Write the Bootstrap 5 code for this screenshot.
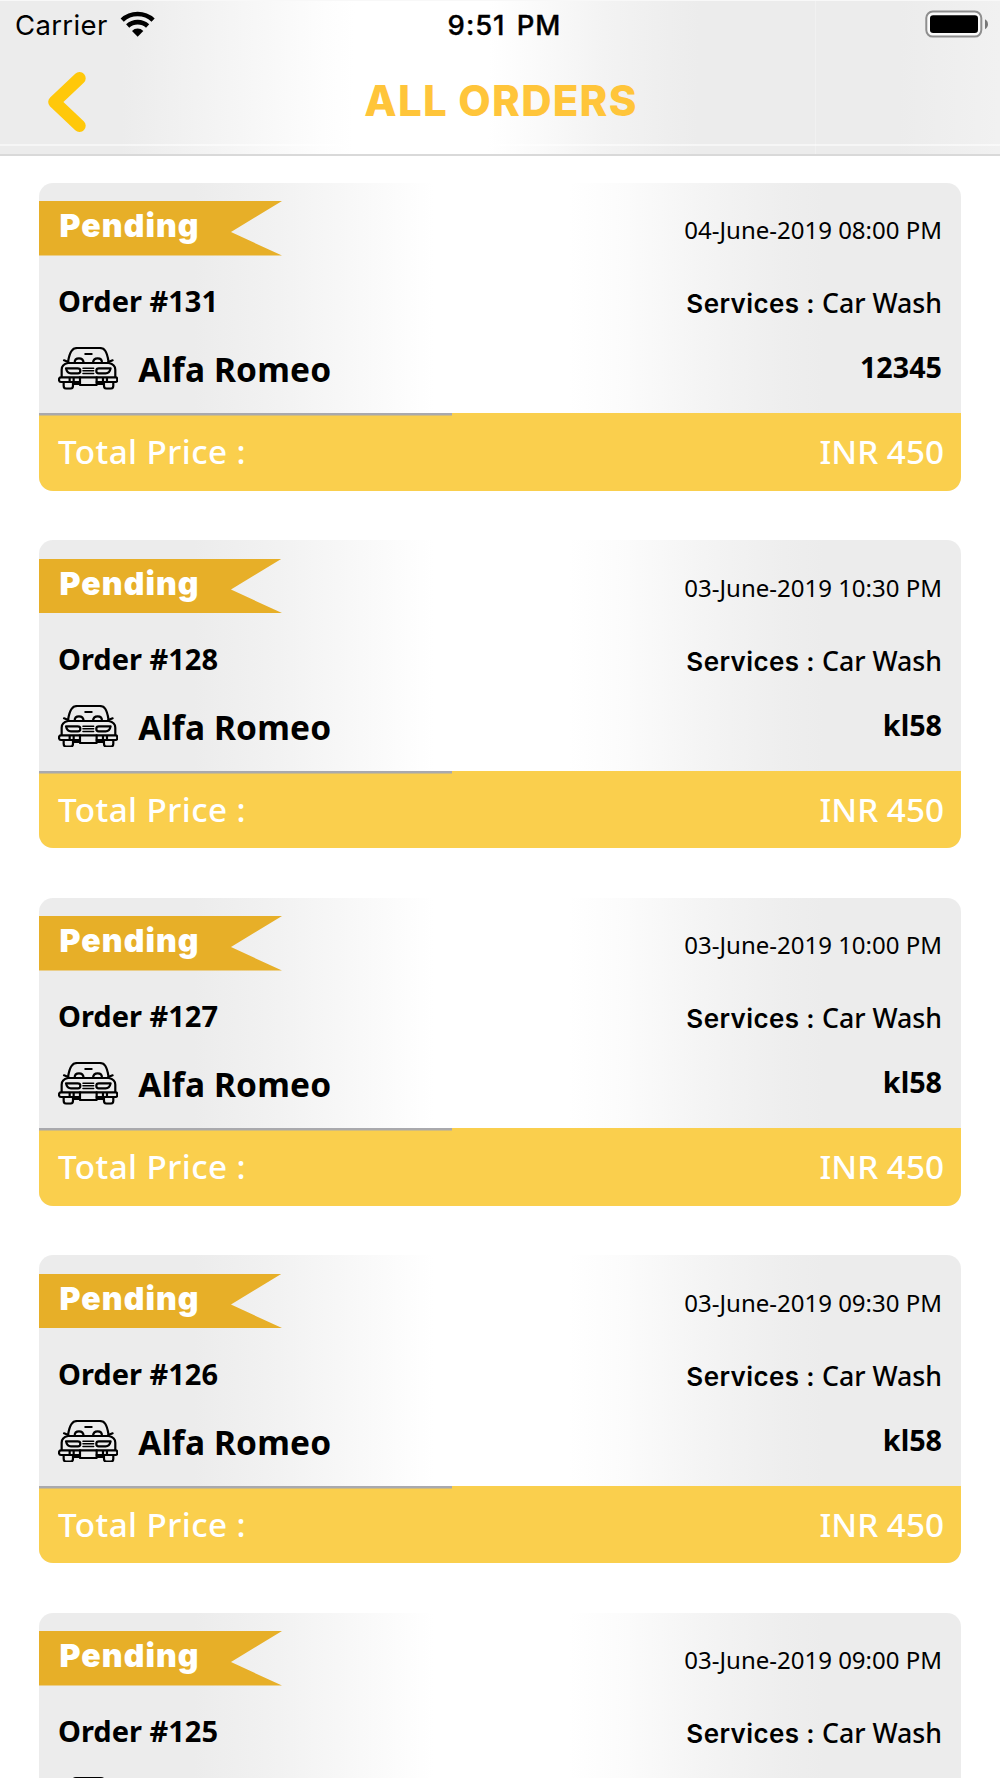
<!DOCTYPE html>
<html lang="en">
<head>
<meta charset="utf-8">
<meta name="viewport" content="width=device-width, initial-scale=1">
<title>All Orders</title>
<link rel="stylesheet" href="https://cdn.jsdelivr.net/npm/bootstrap@5.3.0/dist/css/bootstrap.min.css">
<style>
  body { font-family: "Noto Sans", sans-serif; color: #000; background: #fff; height: 1778px; overflow: hidden; }
  .app-header { height: 156px; border-bottom: 2px solid #d9d9d9; border-top: 1px solid #f8f8f8;
    background:
      linear-gradient(rgba(255,255,255,.55), rgba(255,255,255,.55)) 0 143px / 100% 2px no-repeat,
      linear-gradient(rgba(255,255,255,.25), rgba(255,255,255,.25)) 815px 0 / 1px 100% no-repeat,
      linear-gradient(91deg, #ececec 0, #ececec 124px, #f1f1f1 185px, #f7f7f7 255px, #fdfdfd 325px, #fff 355px, #fff 490px, #fafafa 540px, #f3f3f3 605px, #eeeeee 670px, #ececec 700px, #ececec 900px, #f1f1f1 1000px); }
  .side { flex: 1 1 0; }
  .status-bar { height: 49px; padding: 0 11px 0 15px; font-family: Inter, sans-serif; line-height: 49px; }
  .carrier { font-size: 27.5px; letter-spacing: .35px; }
  .clock { font-size: 27.5px; font-weight: 500; letter-spacing: .95px; word-spacing: 3px; margin-left: 5px; -webkit-text-stroke: .35px #000; }
  .wifi { width: 35.3px; height: 26.3px; margin: 10px 0 0 12px; }
  .battery { width: 64px; height: 28px; margin-top: 9px; }
  .title-bar { height: 104px; padding: 0 48px; }
  .back { width: 38px; height: 60px; margin-top: 22px; }
  .page-title { font: 800 42px/102px Inter, sans-serif; letter-spacing: 1.25px; padding-left: 2px; color: #ffc53a; }
  .orders { padding: 26.5px 39px 0; gap: 49.5px; }
  .order-card { height: 308px; border-radius: 14px; border: 0; overflow: hidden; flex: none; color: #000;
    background: linear-gradient(90deg, #ececec 0, #ececec 155px, #f2f2f2 240px, #f8f8f8 310px, #fdfdfd 370px, #fff 395px, #fff 530px, #fbfbfb 590px, #f4f4f4 665px, #eeeeee 745px, #ececec 785px); }
  .order-body { height: 230.5px; padding: 18.5px 19px 0 0; }
  .ribbon { width: 243px; height: 54.5px; padding-left: 20.5px; background: #e7af28; clip-path: polygon(0 0, 100% 0, 79% 57%, 100% 100%, 0 100%); color: #fff; font: 900 32px/50px Inter, sans-serif; letter-spacing: 1.1px; }
  .when { font-size: 24px; line-height: 57px; }
  .mid-row { height: 67px; margin-top: 9px; padding-left: 19px; line-height: 67px; }
  .order-no { font-size: 29px; font-weight: 700; }
  .svc { font-size: 26.7px; font-weight: 550; line-height: 71px; }
  .svc-label { font: 600 26px Inter, sans-serif; letter-spacing: .4px; }
  .car-row { height: 67px; padding-left: 19px; line-height: 70px; }
  .car-icon { width: 60.3px; height: 42.7px; margin: 13.3px 20px 0 0; }
  .car-name { font-size: 33.5px; font-weight: 700; letter-spacing: .15px; }
  .plate { font-size: 28.7px; font-weight: 700; line-height: 66px; }
  .order-total { height: 77.5px; padding: 0 17px 0 19px; line-height: 77px; color: #fff; font-size: 33.3px; font-weight: 500;
    background: linear-gradient(#a9a9ad, #a9a9ad) 0 0 / 413px 2.5px no-repeat #facf4d; }
  .total-label { letter-spacing: .4px; }
</style>
</head>
<body>
<svg class="d-none" aria-hidden="true">
  <symbol id="car" viewBox="24 36 181 128">
    <g fill="none" stroke="#000" stroke-width="6.6" stroke-linecap="round" stroke-linejoin="round">
      <path d="M54 81C57 62 62 51 66 46Q71 39 82 39H149Q160 39 165 46C169 51 173 62 176 81"/>
      <path d="M42 76L55 81M188 76L175 81M106 57H125"/>
      <path d="M74 83C74 74 78 70 87 70C96 70 100 74 101 83M129 83C130 74 134 70 143 70C152 70 156 74 156 83"/>
      <path d="M54 84H176M54 84Q35 88 35 104V126M176 84Q196 88 196 104V126"/>
      <path d="M48 100H83Q91 100 91 107Q91 115 84 115H63Q51 115 48 100ZM182 100H147Q139 100 139 107Q139 115 146 115H167Q179 115 182 100Z"/>
      <path stroke-width="4.6" d="M99 99.5H131M99 107.5H131M99 115.5H131"/>
      <path d="M90 127H33Q27 127 27 134Q27 141 33 141H90M140 127H197Q202 127 202 134Q202 141 197 141H140M59 128V140M71 128V140M159 128V140M171 128V140"/>
      <path d="M90 127H140V150H90ZM71 147H90M140 147H159"/>
      <path d="M41 142V152Q41 161 49 161H61Q69 161 69 152V142M162 142V152Q162 161 170 161H182Q190 161 190 152V142"/>
    </g>
  </symbol>
</svg>
<header class="app-header">
  <div class="status-bar d-flex">
    <div class="side d-flex">
      <span class="carrier">Carrier</span>
      <svg class="wifi" viewBox="30 33 106 79"><path fill="none" stroke="#000" stroke-width="14" d="M36.6 60.3A68 68 0 0 1 129.4 60.3M53 78A44 44 0 0 1 113 78"/><path d="M66 93A24 24 0 0 1 100 93L83 110Z"/></svg>
    </div>
    <span class="clock">9:51 PM</span>
    <div class="side d-flex justify-content-end">
      <svg class="battery" viewBox="0 0 64 28"><rect x="1.3" y="1.6" width="55" height="25" rx="6.5" fill="#fafafa" stroke="#8e8e8e" stroke-width="2"/><rect x="5" y="5.3" width="48" height="17.7" rx="3.2"/><path d="M60 9.3Q63 11 63 14.3Q63 17.5 60 19.2Z" fill="#777"/></svg>
    </div>
  </div>
  <div class="title-bar d-flex">
    <div class="side"><svg class="back d-block" viewBox="0 0 38 60"><path d="M31.5 6.3L6.4 30L31.5 53.7" fill="none" stroke="#ffc80a" stroke-width="12.4" stroke-linecap="round" stroke-linejoin="round"/></svg></div>
    <span class="page-title">ALL ORDERS</span>
    <div class="side"></div>
  </div>
</header>
<main class="orders d-flex flex-column" id="orders"></main>
<script src="https://cdn.jsdelivr.net/npm/bootstrap@5.3.0/dist/js/bootstrap.bundle.min.js"></script>
<script>
  const orders = [
    [131, '04-June-2019 08:00 PM', '12345'],
    [128, '03-June-2019 10:30 PM', 'kl58'],
    [127, '03-June-2019 10:00 PM', 'kl58'],
    [126, '03-June-2019 09:30 PM', 'kl58'],
    [125, '03-June-2019 09:00 PM', 'kl58']
  ];
  document.getElementById('orders').innerHTML = orders.map(([id, when, plate]) => `
  <article class="card order-card">
    <div class="order-body">
      <div class="d-flex justify-content-between"><div class="ribbon">Pending</div><span class="when">${when}</span></div>
      <div class="mid-row d-flex justify-content-between"><span class="order-no">Order #${id}</span><span class="svc"><span class="svc-label">Services : </span>Car Wash</span></div>
      <div class="car-row d-flex"><svg class="car-icon"><use href="#car"/></svg><span class="car-name">Alfa Romeo</span><span class="plate ms-auto">${plate}</span></div>
    </div>
    <div class="order-total d-flex justify-content-between"><span class="total-label">Total Price :</span><span>INR 450</span></div>
  </article>`).join('');
</script>
</body>
</html>
